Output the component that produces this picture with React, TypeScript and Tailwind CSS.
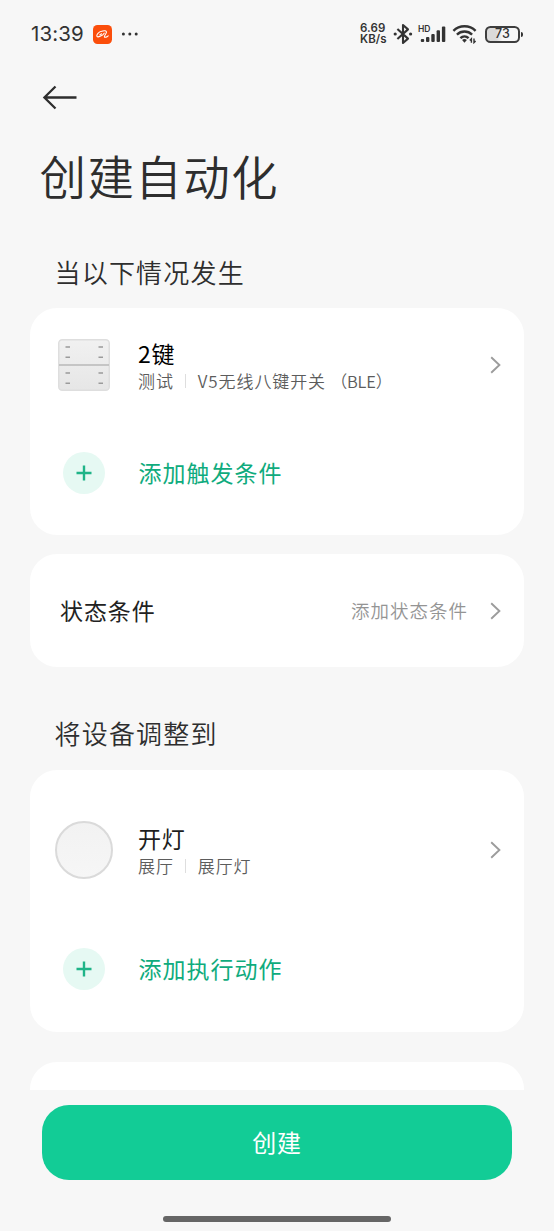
import type { ReactNode } from "react";

const triggers = [
  {
    title: "2键",
    room: "测试",
    device: "V5无线八键开关 ",
    model: "（BLE）",
    icon: <SwitchIcon />,
    titleClass: "text-black",
  },
];

const actions = [
  {
    title: "开灯",
    room: "展厅",
    device: "展厅灯",
    model: "",
    icon: <LampIcon />,
    titleClass: "text-[#1e1e1e]",
  },
];

function SwitchIcon() {
  return (
    <svg width="52" height="52" viewBox="0 0 52 52">
      <defs>
        <linearGradient id="panel" x1="0" y1="0" x2="0" y2="1">
          <stop offset="0" stopColor="#f1f1f1" />
          <stop offset="1" stopColor="#e6e6e6" />
        </linearGradient>
      </defs>
      <rect x="0.75" y="0.75" width="50.5" height="50.5" rx="3.5" fill="url(#panel)" stroke="#dedede" strokeWidth="1.5" />
      <path d="M1 26H51" stroke="#b9b9b9" strokeWidth="1.6" />
      <path
        d="M7.5 8H12M7.5 18.3H12M7.5 34H12M7.5 44.2H12M40.5 8H45M40.5 18.3H45M40.5 34H45M40.5 44.2H45"
        stroke="#9b9b9b"
        strokeWidth="1.4"
      />
    </svg>
  );
}

function LampIcon() {
  return (
    <div className="size-[58px] rounded-full border-2 border-[#dadada] bg-linear-to-b from-[#f2f2f2] to-[#f6f6f6]" />
  );
}

function Chevron() {
  return (
    <svg width="12" height="18" viewBox="0 0 12 18" fill="none" className="shrink-0">
      <path d="M1.2 1.2L9.4 9L1.2 16.8" stroke="#9c9c9c" strokeWidth="1.9" />
    </svg>
  );
}

function StatusBar() {
  return (
    <div className="flex h-[68px] items-center pr-[34px] pl-[31px] font-['Inter','Noto_Sans_CJK_SC',sans-serif] text-[#333]">
      <span className="w-[62px] text-[20.5px] leading-none tracking-[0.1px]">13:39</span>
      <svg width="19" height="19" viewBox="0 0 19 19" fill="none">
        <rect width="19" height="19" rx="4.5" fill="#fb4e0b" />
        <path
          d="M8.8 6.2C5.8 6.6 3.2 9.8 3.9 11.2C4.7 12.8 9.4 11 11.2 8.2M6.8 9.8C8 9.8 8.6 9.2 8.2 8.6M8.8 6.2C11 5.4 13.8 5.6 13.4 7.4C13 9.2 10.9 10.9 11.4 11.9C11.9 12.8 13.8 12 15.2 10.8"
          stroke="#fff"
          strokeWidth="1.1"
          strokeLinecap="round"
        />
      </svg>
      <svg width="18" height="4" viewBox="0 0 18 4" fill="#333" className="ml-[9px]">
        <circle cx="2.4" cy="2" r="1.5" />
        <circle cx="8.8" cy="2" r="1.5" />
        <circle cx="15.2" cy="2" r="1.5" />
      </svg>

      <div className="ml-auto flex items-center">
        <div className="w-[31px] text-[11.5px] leading-[11px] font-semibold whitespace-nowrap">
          <div className="tracking-[0.1px]">6.69</div>
          <div className="tracking-[0.1px]">KB/s</div>
        </div>
        {/* Bluetooth */}
        <svg width="20" height="22" viewBox="0 0 20 22" fill="none" className="ml-[2px]">
          <path d="M4.4 6L15 15.6L10 20V2L15 6.4L4.4 16" stroke="#333" strokeWidth="2.1" strokeLinejoin="round" />
          <circle cx="2.2" cy="11" r="1.6" fill="#333" />
          <circle cx="17.6" cy="11" r="1.6" fill="#333" />
        </svg>
        {/* Mobile signal */}
        <div className="relative ml-[5px] h-[18px] w-[28px]">
          <span className="absolute top-0 left-0 text-[8.5px] leading-none font-semibold">HD</span>
          <svg width="28" height="18" viewBox="0 0 28 18" fill="#333">
            <rect x="2.8" y="14" width="3.4" height="3" rx="1" />
            <rect x="8" y="12" width="3.4" height="5" rx="1" />
            <rect x="13.3" y="9" width="3.4" height="8" rx="1" />
            <rect x="18.6" y="5.2" width="3.4" height="11.8" rx="1" />
            <rect x="23.9" y="1.4" width="3.4" height="15.6" rx="1" />
          </svg>
        </div>
        {/* Wi-Fi */}
        <svg width="26" height="20" viewBox="0 0 26 20" fill="none" className="ml-[6px]">
          <path
            d="M1.4 6.8C7.5 0.8 17.5 0.8 23.6 6.8M4.9 10.6C9.2 6.5 15.8 6.5 20.1 10.6M8.4 14.2C10.8 11.9 14.2 11.9 16.6 14.2"
            stroke="#333"
            strokeWidth="2.4"
          />
          <path d="M10.1 16L12.5 18.8L14.9 16C13.5 14.8 11.5 14.8 10.1 16Z" fill="#333" />
          <path d="M19.4 18.8V14.8L17.8 16.4M22 14.6V18.6L23.6 17" stroke="#333" strokeWidth="1.4" />
        </svg>
        {/* Battery */}
        <div className="relative ml-[7px] flex h-[17px] w-[35px] items-center justify-center rounded-[5.5px] border-2 border-[#3d3d3d] bg-linear-to-r from-[#dadada] from-30% to-[#f7f7f7] to-50%">
          <span className="text-[12.5px] leading-none font-medium">73</span>
          <span className="absolute top-[4px] -right-[5px] h-[5px] w-[2px] rounded-r bg-[#333]" />
        </div>
      </div>
    </div>
  );
}

function Card({ className, children }: { className: string; children?: ReactNode }) {
  return <section className={`mr-[30px] ml-[30px] rounded-[27px] bg-white ${className}`}>{children}</section>;
}

function DeviceRow({ item }: { item: (typeof triggers)[number] }) {
  return (
    <div className="flex h-[58px] items-center pr-[22px]">
      <div className="flex w-[108px] justify-center">{item.icon}</div>
      <div className="flex-1 pt-[2px]">
        <div className={`text-[23px] leading-[30px] tracking-[0.8px] ${item.titleClass}`}>{item.title}</div>
        <div className="flex items-center text-[17px] leading-[26px] font-[350] tracking-[0.9px] whitespace-pre text-[#5c5c5c]">
          <span>{item.room}</span>
          <span className="mr-[12px] ml-[11px] h-[14px] w-px bg-[#dedede]" />
          <span>
            {item.device}
            {item.model && <span className="text-[16.5px] tracking-[-0.2px]">{item.model}</span>}
          </span>
        </div>
      </div>
      <Chevron />
    </div>
  );
}

function AddRow({ label }: { label: string }) {
  return (
    <div className="flex h-[42px] items-center">
      <div className="flex w-[108px] justify-center">
        <div className="flex size-[42px] items-center justify-center rounded-full bg-[#e6f9f3]">
          <svg width="16" height="16" viewBox="0 0 16 16">
            <path d="M8 0.5V15.5M0.5 8H15.5" stroke="#1fb488" strokeWidth="2.4" />
          </svg>
        </div>
      </div>
      <span className="ml-[0.5px] -mt-[2px] text-[23px] leading-none tracking-[1px] text-[#0fab7d]">{label}</span>
    </div>
  );
}

export default function App() {
  return (
    <div className="flex h-[1231px] w-[554px] flex-col overflow-hidden bg-[#f7f7f7] font-['Noto_Sans_CJK_SC',sans-serif] text-[#2e2e2e]">
      <StatusBar />

      <main className="h-[1022px] shrink-0 overflow-hidden">
        <svg width="36" height="26" viewBox="0 0 36 26" fill="none" className="mt-[16px] ml-[42px]">
          <path d="M34.5 13.5H3M13.5 2.5L2.4 13.5L13.5 24.5" stroke="#2e2e2e" strokeWidth="2.3" />
        </svg>

        <h1 className="mt-[35px] ml-[39.5px] text-[46.5px] leading-[60px] font-[350] tracking-[1.4px]">创建自动化</h1>

        <h2 className="mt-[49px] ml-[54.5px] text-[26px] leading-[36px] font-[350] tracking-[1.2px]">当以下情况发生</h2>
        <Card className="mt-[18px] h-[227px] pt-[28px]">
          {triggers.map((item) => (
            <DeviceRow key={item.title} item={item} />
          ))}
          <div className="mt-[58px]">
            <AddRow label="添加触发条件" />
          </div>
        </Card>

        <Card className="mt-[19px] flex h-[113px] items-center pr-[22px] pl-[30px]">
          <span className="flex-1 text-[23px] tracking-[0.9px] text-[#222]">状态条件</span>
          <span className="mr-[22px] text-[18.5px] font-[350] tracking-[1px] text-[#949494]">添加状态条件</span>
          <Chevron />
        </Card>

        <h2 className="mt-[48px] ml-[54.5px] text-[26px] leading-[36px] font-[350] tracking-[1.2px]">将设备调整到</h2>
        <Card className="mt-[19px] h-[262px] pt-[51px]">
          {actions.map((item) => (
            <DeviceRow key={item.title} item={item} />
          ))}
          <div className="mt-[69px]">
            <AddRow label="添加执行动作" />
          </div>
        </Card>

        <Card className="mt-[30px] h-[113px]" />
      </main>

      <footer className="flex flex-1 flex-col items-center pt-[15px]">
        <button className="h-[75px] w-[470px] rounded-[27px] bg-[#12cc96] pb-[2px] text-[24px] tracking-[0.8px] text-white">
          创建
        </button>
        <div className="mt-[36px] h-[6px] w-[228px] rounded-full bg-[#666]" />
      </footer>
    </div>
  );
}
